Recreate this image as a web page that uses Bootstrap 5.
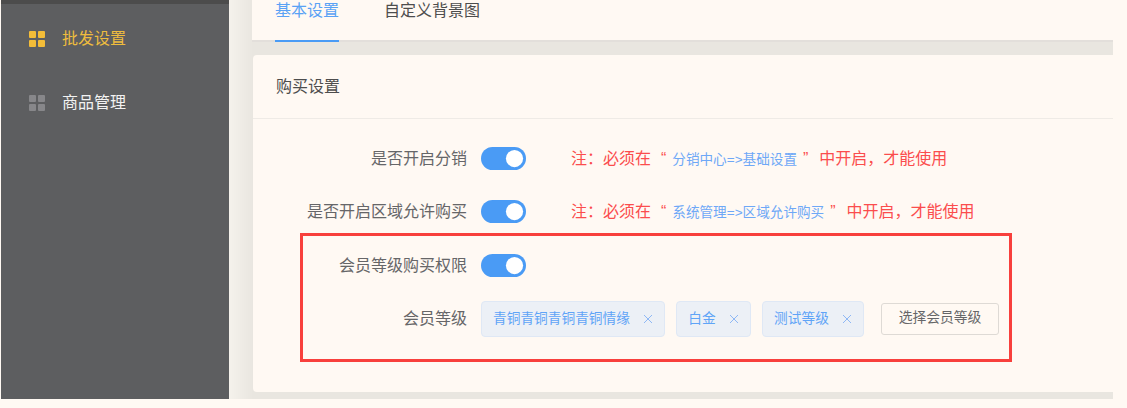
<!DOCTYPE html>
<html lang="zh-CN">
<head>
    <meta charset="UTF-8">
    <meta name="viewport" content="width=device-width, initial-scale=1.0">
    <title>批发设置</title>
    <link href="https://cdn.jsdelivr.net/npm/bootstrap@5.3.0/dist/css/bootstrap.min.css" rel="stylesheet">
    <style>
        html, body {
            height: 408px;
            overflow: hidden;
        }

        body {
            background: #fff9f3;
            color: #666668;
            font-family: "Liberation Sans", "Noto Sans CJK SC", sans-serif;
            font-size: 16px;
        }

        /* Sidebar */
        .side-bar {
            width: 228px;
            height: 399px;
            margin-left: 1px;
            background: #5d5e60;
            border-top: 4px solid #4c4c4c;
            padding-top: 3px;
        }

        .side-item {
            height: 64px;
            padding-left: 27px;
            gap: 16px;
            color: #f2f2f2;
        }

        .side-item.on {
            color: #eebc3e;
        }

        .grid-icon {
            display: block;
        }

        /* Content */
        .main-area {
            width: 884px;
            height: 399px;
            padding-left: 23px;
            background: linear-gradient(90deg, #f5f2ec, #e9e6e0 24px);
        }

        .tab-strip {
            height: 42px;
            background: #fff9f3;
            border-bottom: 2px solid #e3dfdb;
            padding-left: 23px;
            gap: 45px;
        }

        .tab-strip .nav-link {
            height: 42px;
            padding: 0;
            line-height: 22px;
            color: #4d4d4d;
            background: none;
            border: 0;
            border-radius: 0;
        }

        .tab-strip .nav-link.active {
            color: #5aa2f5;
            border-bottom: 2px solid #4a9bf5;
        }

        .set-card {
            height: 337px;
            margin-top: 13px;
            margin-left: 1px;
            background: #fff9f3;
            border: 0;
            border-radius: 4px 0 0 4px;
        }

        .set-card .card-header {
            height: 64px;
            padding: 0 0 0 23px;
            line-height: 63px;
            color: #4d4d4d;
            background: none;
            border-bottom: 1px solid #efebe6;
        }

        .set-card .card-body {
            padding: 18px 0 0;
        }

        .set-rows {
            row-gap: 10px;
        }

        .set-row {
            height: 43px;
        }

        .set-label {
            width: 214px;
            text-align: right;
            margin-right: 14px;
        }

        .set-row .form-check-input {
            width: 45px;
            height: 23px;
            margin: 0;
            float: none;
            background-color: #4a9bf5;
            border: 0;
        }

        .set-row .form-switch {
            padding: 0;
            margin: 0;
            min-height: 0;
            line-height: 0;
        }

        .set-note {
            margin-left: 45px;
            color: #fb4d4d;
        }

        .set-link {
            font-size: 13.6px;
            color: #6ea8f7;
        }

        .quote-open {
            margin: 0 6px 0 10px;
        }

        .quote-close {
            margin: 0 11px 0 6px;
        }

        .mark-box {
            width: 712px;
            height: 129px;
            margin-left: 47px;
            padding-top: 8px;
            border: 3px solid #f8403c;
        }

        .mark-box .set-label {
            width: 164px;
        }

        .lvl-tag {
            height: 36px;
            margin-right: 11px;
            padding: 0 11px;
            gap: 13.4px;
            font-size: 13.7px;
            font-weight: 400;
            color: #5fa4f7;
            background: #ecf0f6;
            border: 1px solid #dfe8f5;
            border-radius: 4px;
        }

        .lvl-tag svg {
            display: block;
        }

        .pick-btn {
            width: 118px;
            height: 32px;
            margin-left: 5.8px;
            padding: 0;
            font-size: 13.8px;
            color: #666668;
            background: #fff9f3;
            border: 1px solid #dedad5;
            border-radius: 3px;
        }
    </style>
</head>
<body>
    <div class="d-flex">
        <div class="side-bar flex-shrink-0">
            <div class="side-item on d-flex align-items-center">
                <svg class="grid-icon" width="18" height="16" viewBox="0 0 18 16" fill="#f4bd38"><rect x="1" width="7" height="7" rx="1"/><rect x="10" width="7" height="7" rx="1"/><rect x="1" y="9" width="7" height="7" rx="1"/><rect x="10" y="9" width="7" height="7" rx="1"/></svg>
                <span>批发设置</span>
            </div>
            <div class="side-item d-flex align-items-center">
                <svg class="grid-icon" width="18" height="16" viewBox="0 0 18 16" fill="#87878a"><rect x="1" width="7" height="7" rx="1"/><rect x="10" width="7" height="7" rx="1"/><rect x="1" y="9" width="7" height="7" rx="1"/><rect x="10" y="9" width="7" height="7" rx="1"/></svg>
                <span>商品管理</span>
            </div>
        </div>

        <div class="main-area flex-shrink-0">
            <ul class="nav tab-strip">
                <li class="nav-item"><a class="nav-link active" href="#">基本设置</a></li>
                <li class="nav-item"><a class="nav-link" href="#">自定义背景图</a></li>
            </ul>

            <div class="card set-card">
                <div class="card-header">购买设置</div>
                <div class="card-body">
                    <div class="set-rows d-flex flex-column">
                        <div class="set-row d-flex align-items-center">
                            <label class="set-label">是否开启分销</label>
                            <div class="form-check form-switch"><input class="form-check-input" type="checkbox" checked></div>
                            <div class="set-note">注：必须在<span class="quote-open">“</span><span class="set-link">分销中心=&gt;基础设置</span><span class="quote-close">”</span>中开启，才能使用</div>
                        </div>
                        <div class="set-row d-flex align-items-center">
                            <label class="set-label">是否开启区域允许购买</label>
                            <div class="form-check form-switch"><input class="form-check-input" type="checkbox" checked></div>
                            <div class="set-note">注：必须在<span class="quote-open">“</span><span class="set-link">系统管理=&gt;区域允许购买</span><span class="quote-close">”</span>中开启，才能使用</div>
                        </div>
                    </div>
                    <div class="mark-box">
                        <div class="set-rows d-flex flex-column">
                            <div class="set-row d-flex align-items-center">
                                <label class="set-label">会员等级购买权限</label>
                                <div class="form-check form-switch"><input class="form-check-input" type="checkbox" checked></div>
                            </div>
                            <div class="set-row d-flex align-items-center">
                                <label class="set-label">会员等级</label>
                                <span class="badge lvl-tag d-flex align-items-center">青铜青铜青铜青铜情缘
                                    <svg width="10" height="10" viewBox="0 0 10 10" stroke="#8fb8f5" fill="none"><path d="M1 1l8 8M9 1l-8 8"/></svg></span>
                                <span class="badge lvl-tag d-flex align-items-center">白金
                                    <svg width="10" height="10" viewBox="0 0 10 10" stroke="#8fb8f5" fill="none"><path d="M1 1l8 8M9 1l-8 8"/></svg></span>
                                <span class="badge lvl-tag d-flex align-items-center">测试等级
                                    <svg width="10" height="10" viewBox="0 0 10 10" stroke="#8fb8f5" fill="none"><path d="M1 1l8 8M9 1l-8 8"/></svg></span>
                                <button class="btn pick-btn" type="button">选择会员等级</button>
                            </div>
                        </div>
                    </div>
                </div>
            </div>
        </div>
    </div>
    <script src="https://cdn.jsdelivr.net/npm/bootstrap@5.3.0/dist/js/bootstrap.bundle.min.js"></script>
</body>
</html>
